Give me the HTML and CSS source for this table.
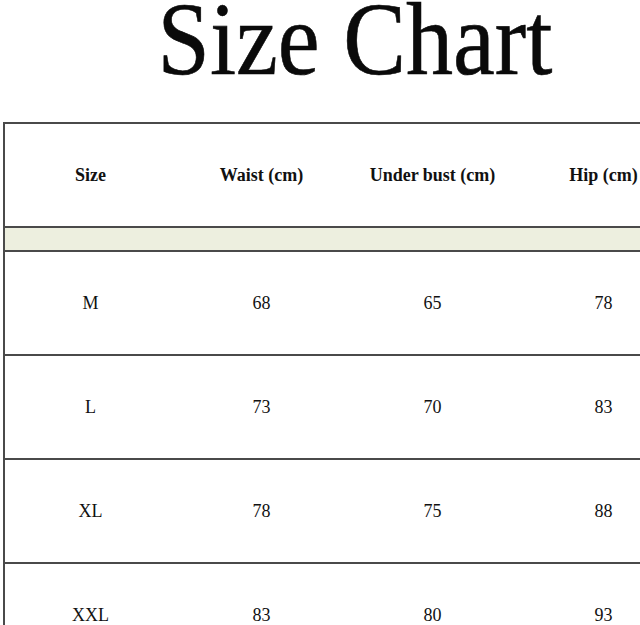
FILE: index.html
```html
<!DOCTYPE html>
<html>
<head>
<meta charset="utf-8">
<link rel="stylesheet" href="styles.css">
</head>
<body>
<div class="page">
  <div class="title-wrap"><h1 class="title">Size Chart</h1></div>
  <div class="chart">
    <div class="row head">
      <div class="cell">Size</div>
      <div class="cell">Waist (cm)</div>
      <div class="cell">Under bust (cm)</div>
      <div class="cell">Hip (cm)</div>
    </div>
    <div class="band"></div>
    <div class="row">
      <div class="cell">M</div><div class="cell">68</div><div class="cell">65</div><div class="cell">78</div>
    </div>
    <div class="row">
      <div class="cell">L</div><div class="cell">73</div><div class="cell">70</div><div class="cell">83</div>
    </div>
    <div class="row">
      <div class="cell">XL</div><div class="cell">78</div><div class="cell">75</div><div class="cell">88</div>
    </div>
    <div class="row">
      <div class="cell">XXL</div><div class="cell">83</div><div class="cell">80</div><div class="cell">93</div>
    </div>
  </div>
</div>
</body>
</html>
```
FILE: styles.css
```css
html, body {
  margin: 0;
  padding: 0;
  background: #fff;
  overflow: hidden;
}
.page {
  width: 640px;
  height: 625px;
  overflow: hidden;
  font-family: "Liberation Serif", "Times New Roman", serif;
  color: #111;
}
.title-wrap {
  height: 122px;
  display: flex;
  justify-content: center;
  align-items: flex-start;
  padding-left: 70px;
  box-sizing: border-box;
}
.title {
  margin: -20px 0 0 0;
  font-weight: normal;
  font-size: 103px;
  line-height: normal;
  white-space: nowrap;
  transform: scaleX(0.914);
  transform-origin: center top;
  color: #0a0a0a;
  -webkit-text-stroke: 0.6px #0a0a0a;
}
.chart {
  margin-left: 3px;
  width: 700px;
  border-left: 2px solid #4a4a4a;
}
.row {
  display: flex;
  height: 102px;
  border-top: 2px solid #4a4a4a;
}
.cell {
  width: 171px;
  flex: none;
  display: flex;
  align-items: center;
  justify-content: center;
  font-size: 18px;
  white-space: nowrap;
}
.head .cell {
  font-weight: bold;
  font-size: 18px;
}
.band {
  height: 22px;
  border-top: 2px solid #4a4a4a;
  background: #edefdf;
}
```
